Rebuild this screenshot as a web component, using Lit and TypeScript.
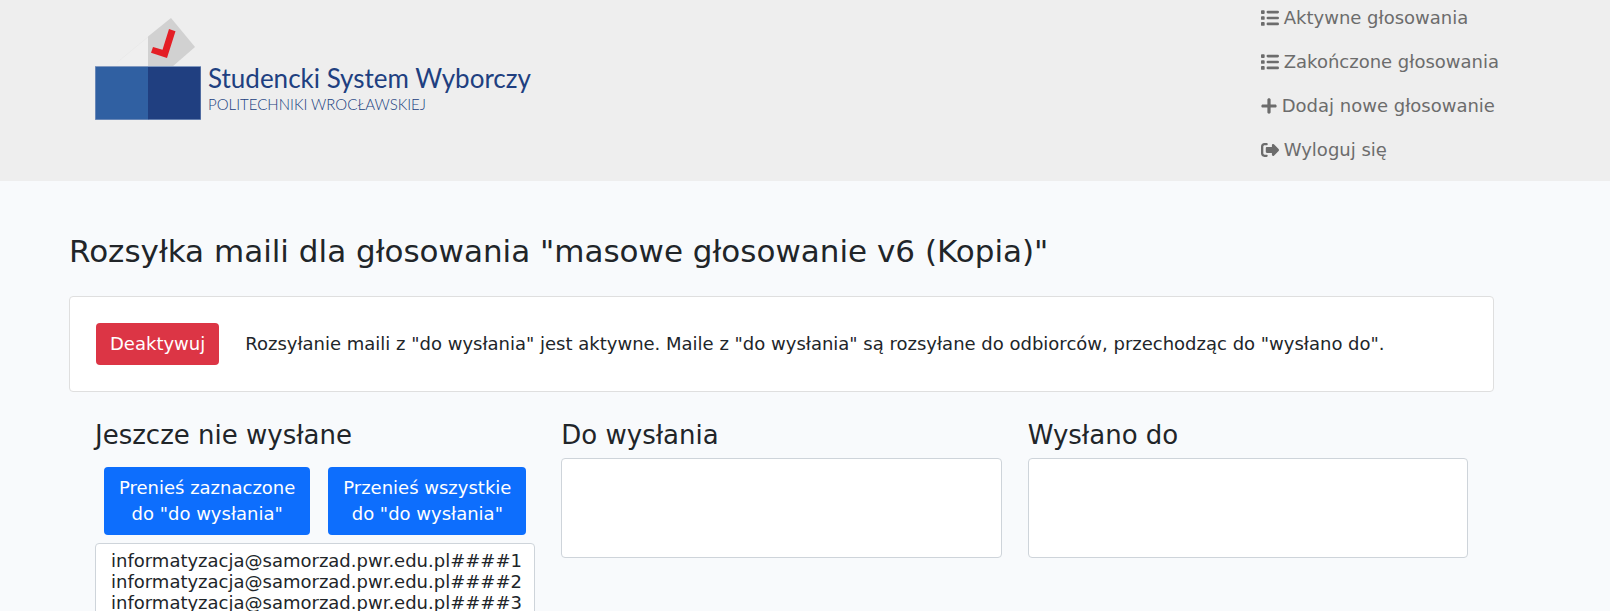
import { LitElement, html, css, svg } from "lit";
import { customElement, state } from "lit/decorators.js";

const icons: Record<string, unknown> = {
  list: svg`<svg class="icon" viewBox="0 0 512 512" width="18" height="18" aria-hidden="true"><path d="M24 36H80a24 24 0 0 1 24 24v56a24 24 0 0 1-24 24H24a24 24 0 0 1-24-24V60a24 24 0 0 1 24-24zM24 204H80a24 24 0 0 1 24 24v56a24 24 0 0 1-24 24H24a24 24 0 0 1-24-24v-56a24 24 0 0 1 24-24zM24 372H80a24 24 0 0 1 24 24v56a24 24 0 0 1-24 24H24a24 24 0 0 1-24-24v-56a24 24 0 0 1 24-24zM196 50H474a38 38 0 0 1 0 76H196a38 38 0 0 1 0-76zM196 218H474a38 38 0 0 1 0 76H196a38 38 0 0 1 0-76zM196 386H474a38 38 0 0 1 0 76H196a38 38 0 0 1 0-76z"/></svg>`,
  plus: svg`<svg class="icon" viewBox="0 0 448 512" width="16" height="18" aria-hidden="true"><path d="M442 256c0 27-18 46-42 46H270v132c0 26-20 42-46 42s-46-16-46-42V302H48c-24 0-42-19-42-46s18-46 42-46H178V78c0-26 20-42 46-42s46 16 46 42V210H400c24 0 42 19 42 46z"/></svg>`,
  logout: svg`<svg class="icon" viewBox="0 0 512 512" width="18" height="18" aria-hidden="true"><path d="M367.900 95.900L500.700 228.700c7.200 7.200 11.300 17.100 11.300 27.300s-4.100 20.100-11.300 27.300L367.900 416.100c-6.400 6.400-15 9.900-24 9.900c-18.700 0-33.900-15.200-33.900-33.900v-54H168c-17.700 0-32-14.300-32-32v-100c0-17.700 14.300-32 32-32H310v-54c0-18.700 15.200-33.900 33.900-33.900c9 0 17.600 3.600 24 9.900zM160 124H104c-22 0-38 16-38 38v188c0 22 16 38 38 38h56c16 0 32 14 32 32s-16 32-32 32H96c-53 0-96-43-96-96V156C0 103 43 60 96 60h64c16 0 32 14 32 32s-16 32-32 32z"/></svg>`,
};

const links = [
  { icon: "list", label: "Aktywne głosowania" },
  { icon: "list", label: "Zakończone głosowania" },
  { icon: "plus", label: "Dodaj nowe głosowanie" },
  { icon: "logout", label: "Wyloguj się" },
];

@customElement("app-header")
class AppHeader extends LitElement {
  static styles = css`
    :host {
      display: flex;
      justify-content: space-between;
      align-items: flex-start;
      padding: 5px 111px 18px 69px;
      background: #eee;
    }
    .brand {
      display: flex;
      gap: 7px;
      padding: 13px 26px 0;
      color: #203f80;
      text-decoration: none;
      font-family: Lato, sans-serif;
      white-space: nowrap;
    }
    .words {
      display: flex;
      flex-direction: column;
      padding-top: 44px;
    }
    .title {
      font-size: 26px;
      line-height: 32px;
    }
    .subtitle {
      font-size: 15px;
      line-height: 20px;
      font-weight: 300;
    }
    .menu {
      display: flex;
      flex-direction: column;
      gap: 18px;
      margin: 0;
      padding: 0;
      list-style: none;
    }
    .link {
      display: flex;
      align-items: center;
      gap: 5px;
      color: #6c6c6c;
      font-size: 18px;
      line-height: 26px;
      text-decoration: none;
      white-space: nowrap;
    }
    .icon {
      fill: currentColor;
    }
  `;

  render() {
    return html`
      <a class="brand" href="#">
        <svg width="106" height="102" viewBox="0 0 106 102" aria-hidden="true">
          <path d="M22 44.500L53 19V49H26Z" fill="#efefef" />
          <path d="M22 44.500L53 19" fill="none" stroke="#e4e4e4" stroke-width=".5" />
          <path d="M53 18.500L76 0L100 29L77 49H53Z" fill="#d1d1d1" />
          <path d="M74 11L80.500 13.300L72 40L56 34.700L58 29L67.500 31.700Z" fill="#e41e25" />
          <rect x="0" y="48" width="106" height="54" fill="#8199c0" />
          <rect x=".7" y="49" width="53" height="52.300" fill="#3060a2" />
          <rect x="53" y="49" width="52.500" height="52.300" fill="#203f80" />
        </svg>
        <span class="words">
          <span class="title">Studencki System Wyborczy</span>
          <span class="subtitle">POLITECHNIKI WROCŁAWSKIEJ</span>
        </span>
      </a>
      <nav>
        <ul class="menu">
          ${links.map((l) => html`<li><a class="link" href="#">${icons[l.icon]}<span>${l.label}</span></a></li>`)}
        </ul>
      </nav>
    `;
  }
}

@customElement("app-root")
class AppRoot extends LitElement {
  @state() pending = [1, 2, 3].map((n) => `informatyzacja@samorzad.pwr.edu.pl####${n}`);

  static styles = css`
    :host {
      display: block;
      min-height: 100vh;
      background: #f8fafc;
      color: #212529;
      font-family: "DejaVu Sans", sans-serif;
      font-size: 18px;
      line-height: 26px;
    }
    .page {
      display: flex;
      flex-direction: column;
      gap: 26px;
      padding: 52px 116px 0 69px;
    }
    .heading {
      margin: 0;
      font-size: 31px;
      line-height: 37px;
      font-weight: 500;
    }
    .card {
      display: flex;
      align-items: center;
      gap: 26px;
      padding: 26px;
      border: 1px solid #dfdfdf;
      border-radius: 4px;
      background: #fff;
    }
    .status {
      margin: 0;
    }
    .button {
      border: 1px solid transparent;
      border-radius: 4px;
      padding: 7px 12px;
      color: #fff;
      font: inherit;
    }
    .danger {
      padding: 7px 13px;
      background: #dc3545;
    }
    .primary {
      flex: 1 1 auto;
      background: #0d6efd;
    }
    .columns {
      display: grid;
      grid-template-columns: repeat(3, minmax(0, 1fr));
      gap: 26px;
      align-items: start;
      padding: 0 26px;
    }
    .column {
      display: flex;
      flex-direction: column;
    }
    .label {
      padding-bottom: 6px;
      font-size: 26px;
      line-height: 34px;
      font-weight: 500;
    }
    .actions {
      display: flex;
      gap: 18px;
      padding: 9px 9px 8px;
    }
    .select {
      width: 100%;
      height: 100px;
      padding: 6px 13px;
      border: 1px solid #ced4da;
      border-radius: 4px;
      background: #fff;
      color: inherit;
      font: inherit;
      overflow: hidden;
    }
    .option {
      min-height: 21px;
      height: 21px;
      padding: 0 2px;
      line-height: 21px;
    }
  `;

  render() {
    return html`
      <app-header></app-header>
      <main class="page">
        <h1 class="heading">Rozsyłka maili dla głosowania "masowe głosowanie v6 (Kopia)"</h1>
        <section class="card">
          <button class="button danger" type="button">Deaktywuj</button>
          <p class="status">
            Rozsyłanie maili z "do wysłania" jest aktywne. Maile z "do wysłania" są rozsyłane do odbiorców, przechodząc do "wysłano do".
          </p>
        </section>
        <section class="columns">
          <div class="column">
            <label class="label" for="pending">Jeszcze nie wysłane</label>
            <div class="actions">
              <button class="button primary" type="button">Prenieś zaznaczone<br />do "do wysłania"</button>
              <button class="button primary" type="button">Przenieś wszystkie<br />do "do wysłania"</button>
            </div>
            <select class="select" id="pending" multiple size="4">
              ${this.pending.map((m) => html`<option class="option">${m}</option>`)}
            </select>
          </div>
          <div class="column">
            <label class="label" for="queued">Do wysłania</label>
            <select class="select" id="queued" multiple size="4"></select>
          </div>
          <div class="column">
            <label class="label" for="sent">Wysłano do</label>
            <select class="select" id="sent" multiple size="4"></select>
          </div>
        </section>
      </main>
    `;
  }
}
